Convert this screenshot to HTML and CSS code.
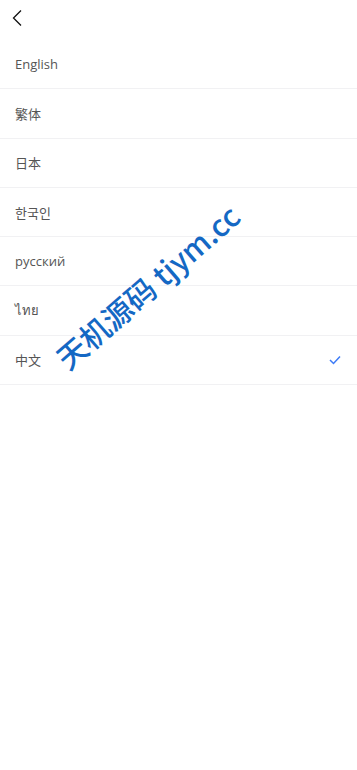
FILE: index.html
```html
<!DOCTYPE html>
<html>
<head>
<meta charset="utf-8">
<link rel="stylesheet" href="styles.css">
</head>
<body>
<div class="page">
  <header class="top">
    <svg class="back" width="12" height="18" viewBox="0 0 12 18"><path d="M10 1.5 L2.5 9 L10 16.5" fill="none" stroke="#111" stroke-width="1.3"/></svg>
  </header>
  <ul class="list">
    <li class="row">English</li>
    <li class="row">繁体</li>
    <li class="row">日本</li>
    <li class="row">한국인</li>
    <li class="row">русский</li>
    <li class="row">ไทย</li>
    <li class="row">中文<svg class="check" width="12" height="10" viewBox="0 0 12 10"><path d="M1 5 L4.5 8.5 L11 1.5" fill="none" stroke="#3d7bf7" stroke-width="1.5"/></svg></li>
  </ul>
  <div class="mark">天机源码 tjym.cc</div>
</div>
</body>
</html>
```
FILE: styles.css
```css
* { box-sizing: border-box; }
html, body { margin: 0; padding: 0; background: #fff; }
body { font-family: "Open Sans", "Noto Sans", "Noto Sans CJK SC", sans-serif; }
.page { position: relative; width: 357px; min-height: 770px; }
.top { height: 40px; display: flex; align-items: center; padding-left: 11px; padding-bottom: 4px; }
.back { display: block; }
.list { list-style: none; margin: 0; padding: 0; }
.row {
  height: 49.3px;
  display: flex;
  align-items: center;
  justify-content: space-between;
  padding: 0 15px 0 15px;
  font-size: 13px;
  color: #555;
  border-bottom: 1px solid #f1f1f3;
}
.check { display: block; margin-right: 1px; }
.mark {
  position: absolute;
  left: 7px;
  top: 271px;
  width: 280px;
  text-align: center;
  font-family: "Noto Sans CJK SC", "Noto Sans", sans-serif;
  font-weight: 500;
  font-size: 30px;
  color: #1468c4;
  transform: rotate(-41deg);
  white-space: nowrap;
  line-height: 1;
}
```
